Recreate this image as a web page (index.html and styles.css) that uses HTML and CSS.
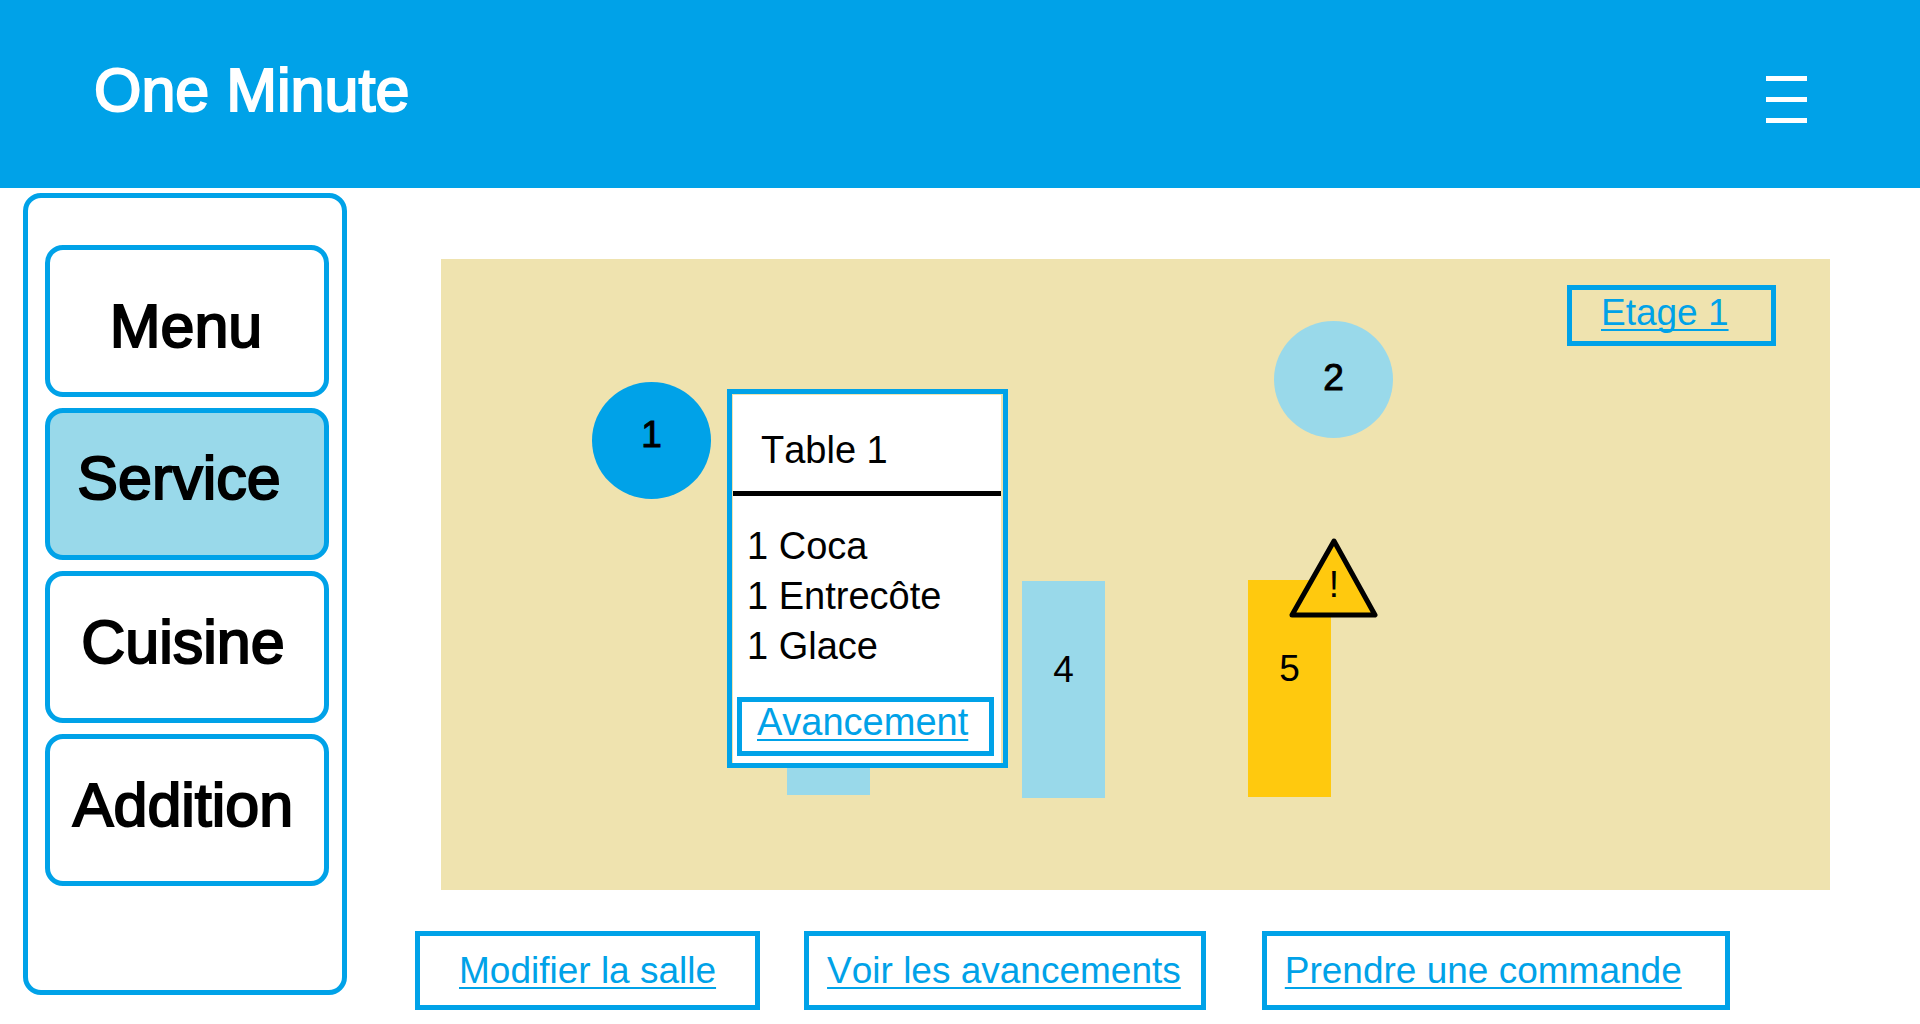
FILE: index.html
```html
<!DOCTYPE html>
<html lang="fr">
<head>
  <meta charset="utf-8">
  <meta name="viewport" content="width=device-width, initial-scale=1">
  <title>One Minute</title>
  <link rel="stylesheet" href="styles.css">
</head>
<body>
  <header class="topbar">
    <h1 class="brand">One Minute</h1>
    <button class="burger" type="button" aria-label="Ouvrir le menu">
      <span class="burger-bar"></span>
      <span class="burger-bar"></span>
      <span class="burger-bar"></span>
    </button>
  </header>

  <div class="layout">
    <nav class="sidebar">
      <button class="nav-item nav-item--first" type="button">Menu</button>
      <button class="nav-item nav-item--active" type="button" aria-current="page">Service</button>
      <button class="nav-item" type="button">Cuisine</button>
      <button class="nav-item" type="button">Addition</button>
    </nav>

    <main class="content">
      <section class="room">
        <a class="link-box link-box--floor" href="#etage">Etage 1</a>

        <button class="seat seat--round seat--selected seat-1" type="button">1</button>
        <button class="seat seat--round seat-2" type="button">2</button>
        <button class="seat seat--long seat-3" type="button" aria-label="Table 3"></button>
        <button class="seat seat--long seat-4" type="button">4</button>
        <button class="seat seat--long seat--alert seat-5" type="button">5</button>

        <div class="warning">
          <svg class="warning-shape" viewBox="0 0 90 80" aria-hidden="true">
            <path d="M45 3 L86 77 H3 Z" fill="#ffc90e" stroke="#000" stroke-width="5" stroke-linejoin="round"/>
          </svg>
          <span class="warning-mark">!</span>
        </div>

        <article class="order">
          <h2 class="order-title">Table 1</h2>
          <ul class="order-list">
            <li>1 Coca</li>
            <li>1 Entrecôte</li>
            <li>1 Glace</li>
          </ul>
          <a class="link-box link-box--order" href="#avancement">Avancement</a>
        </article>
      </section>

      <div class="actions">
        <a class="link-box link-box--wide" href="#salle">Modifier la salle</a>
        <a class="link-box" href="#avancements">Voir les avancements</a>
        <a class="link-box link-box--last" href="#commande">Prendre une commande</a>
      </div>
    </main>
  </div>
</body>
</html>
```

FILE: styles.css
```css
:root {
  --blue: #00a2e8;
  --pale: #99d9ea;
  --sand: #efe3af;
  --amber: #ffc90e;
}

* {
  box-sizing: border-box;
}

body {
  margin: 0;
  background: #fff;
  color: #000;
  font-family: "Liberation Sans", Arial, sans-serif;
  font-size: 37px;
  font-kerning: none;
  font-variant-ligatures: none;
}

button {
  margin: 0;
  padding: 0;
  border: 0;
  background: none;
  color: inherit;
  font: inherit;
  cursor: pointer;
}

/* Header */

.topbar {
  display: flex;
  align-items: center;
  justify-content: space-between;
  height: 188px;
  padding: 0 113px 0 94px;
  background: var(--blue);
  color: #fff;
}

.brand {
  margin: 0;
  padding-bottom: 8px;
  font-size: 61px;
  font-weight: 400;
  -webkit-text-stroke: 2px currentColor;
}

.burger {
  display: flex;
  flex-direction: column;
  gap: 16px;
  padding-top: 10px;
}

.burger-bar {
  width: 41px;
  height: 5px;
  background: #fff;
}

/* Page body */

.layout {
  display: flex;
  align-items: flex-start;
  gap: 68px;
  padding: 5px 90px 12px 23px;
}

.sidebar {
  display: flex;
  flex: none;
  flex-direction: column;
  gap: 11px;
  width: 324px;
  min-height: 802px;
  padding: 47px 13px 47px 17px;
  border: 5px solid var(--blue);
  border-radius: 18px;
}

.nav-item {
  height: 152px;
  padding: 0 8px 10px 0;
  border: 5px solid var(--blue);
  border-radius: 18px;
  font-size: 61px;
  -webkit-text-stroke: 2px currentColor;
}

.nav-item--first {
  padding: 10px 2px 0 0;
}

.nav-item--active {
  padding: 0 16px 12px 0;
  background: var(--pale);
}

.content {
  flex: 1;
  min-width: 0;
  padding-top: 66px;
}

/* Floor plan: tables sit freely on the room canvas */

.room {
  position: relative;
  min-height: 631px;
  margin-left: 26px;
  background: var(--sand);
}

.seat {
  position: absolute;
  display: flex;
  align-items: center;
  justify-content: center;
  background: var(--pale);
}

.seat--round {
  width: 119px;
  height: 117px;
  padding-bottom: 4px;
  border-radius: 50%;
  -webkit-text-stroke: 1px currentColor;
}

.seat--long {
  width: 83px;
  height: 217px;
  padding-bottom: 39px;
}

.seat--selected {
  padding-bottom: 12px;
  background: var(--blue);
}

.seat--alert {
  background: var(--amber);
}

.seat-1 {
  left: 151px;
  top: 123px;
}

.seat-2 {
  left: 833px;
  top: 62px;
}

.seat-3 {
  left: 346px;
  top: 319px;
}

.seat-4 {
  left: 581px;
  top: 322px;
}

.seat-5 {
  left: 807px;
  top: 321px;
}

.warning {
  position: absolute;
  left: 848px;
  top: 279px;
  width: 90px;
  height: 80px;
}

.warning-shape {
  display: block;
}

.warning-mark {
  position: absolute;
  inset: 26px 0 0;
  line-height: 42px;
  text-align: center;
}

/* Boxed links */

.link-box {
  display: flex;
  align-items: center;
  padding: 0 20px 0 18px;
  border: 5px solid var(--blue);
  color: var(--blue);
  text-decoration: underline;
  text-decoration-thickness: 2px;
  text-decoration-skip-ink: none;
  text-underline-offset: 4px;
  white-space: nowrap;
}

.link-box--floor {
  position: absolute;
  top: 26px;
  right: 54px;
  width: 209px;
  height: 61px;
  padding: 0 29px 6px;
}

.actions {
  display: flex;
  flex-wrap: wrap;
  gap: 44px;
  padding-top: 41px;
}

.actions .link-box {
  height: 79px;
}

.actions .link-box--wide {
  padding: 0 39px;
}

.actions .link-box--last {
  margin-left: 12px;
  padding-right: 43px;
}

/* Order summary, floating over the plan */

.order {
  position: absolute;
  left: 286px;
  top: 130px;
  width: 281px;
  padding: 1px 2px 0 1px;
  border: 5px solid var(--blue);
  background: #fff;
  background-clip: content-box;
  font-size: 38px;
}

.order-title {
  margin: 0;
  padding: 34px 28px 20px;
  border-bottom: 5px solid #000;
  font-size: 38px;
  font-weight: 400;
  line-height: 42px;
}

.order-list {
  margin: 0;
  padding: 25px 14px 26px;
  list-style: none;
  line-height: 50px;
}

.link-box--order {
  width: 257px;
  height: 59px;
  margin: 0 0 7px 4px;
  padding: 0 15px 8px;
}
```
